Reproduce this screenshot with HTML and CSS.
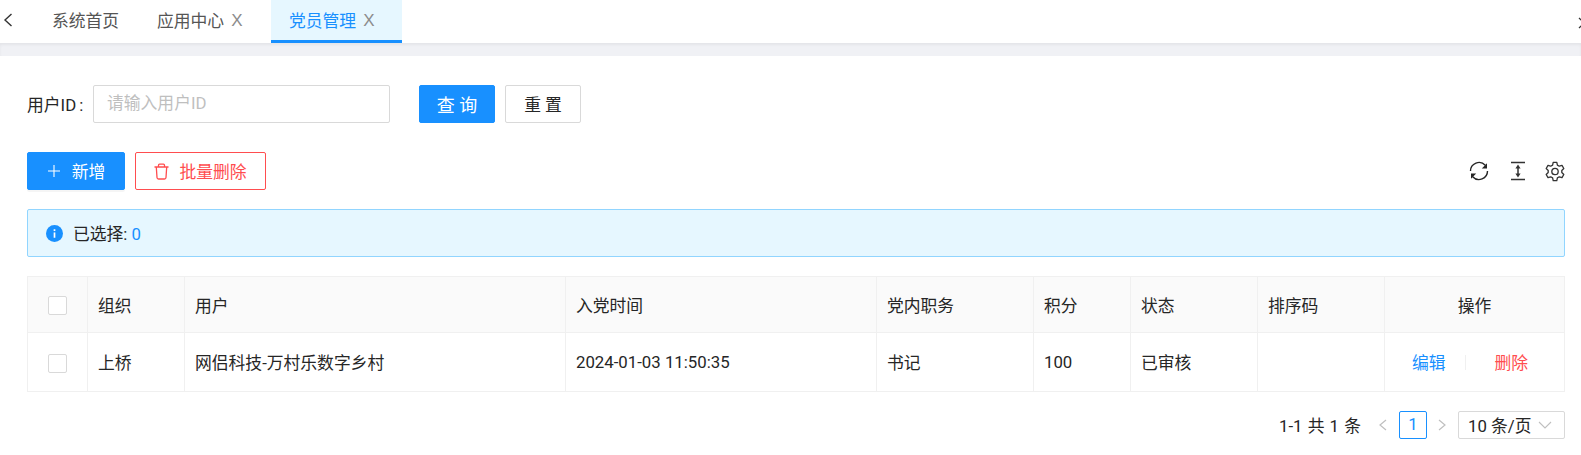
FILE: index.html
```html
<!DOCTYPE html>
<html lang="zh-CN">
<head>
    <meta charset="UTF-8">
    <title>党员管理</title>
    <link rel="stylesheet" href="styles.css">
</head>
<body>
    <div class="tabbar">
        <span class="tab-arrow">
            <svg width="10" height="14" viewBox="0 0 10 14"><path d="M8.500 1 2 7l6.500 6" fill="none" stroke="#333" stroke-width="1.400"/></svg>
        </span>
        <div class="tab tab-home">系统首页</div>
        <div class="tab tab-app">应用中心<span class="tab-x">X</span></div>
        <div class="tab tab-active">党员管理<span class="tab-x">X</span></div>
        <span class="tab-arrow-right">
            <svg width="10" height="12" viewBox="0 0 10 12"><path d="M2 1 7.500 6 2 11" fill="none" stroke="#333" stroke-width="1.300"/></svg>
        </span>
    </div>
    <div class="gap-bar"></div>

    <div class="content">
        <form class="search-row">
            <label class="search-label">用户ID<span class="colon">:</span></label>
            <div class="search-input">请输入用户ID</div>
            <button type="button" class="btn btn-primary btn-search">查 询</button>
            <button type="button" class="btn btn-reset">重 置</button>
        </form>

        <div class="toolbar">
            <button type="button" class="btn btn-primary btn-add">
                <svg width="14" height="14" viewBox="0 0 14 14"><path d="M7 1v12M1 7h12" stroke="#fff" stroke-width="1.100"/></svg>
                新增
            </button>
            <button type="button" class="btn btn-danger">
                <svg width="15" height="17" viewBox="0 0 15 17" fill="none" stroke="#ff4d4f" stroke-width="1.300"><path d="M.5 4h14M4.500 4V2.200q0-1 1-1h4q1 0 1 1V4M2.300 4l.7 10.500q.1 1.500 1.500 1.500h6q1.400 0 1.500-1.500L12.700 4"/></svg>
                批量删除
            </button>
            <div class="tool-icons">
                <svg width="20" height="20" viewBox="0 0 20 20" fill="none"><path d="M1.500 10A8.500 8.500 0 0 1 16.300 4.300M18.500 10A8.500 8.500 0 0 1 3.700 15.700" stroke="#262626" stroke-width="1.400"/><path d="M18 2.300v5.200h-5.200zM2 17.700v-5.200h5.200z" fill="#262626"/></svg>
                <svg class="icon-height" width="16" height="20" viewBox="0 0 16 20" fill="none"><path d="M1 1.500h14M1 18.500h14M8 5v10" stroke="#333" stroke-width="1.500"/><path d="M8 3.500 5.400 7.500h5.200zM8 16.500 5.400 12.500h5.200z" fill="#333"/></svg>
                <svg width="20" height="21" viewBox="0 0 20 20" fill="none" stroke="#333" stroke-width="1.300"><path d="M8.200.8h3.600l.6 2.800 1.900 1.100 2.700-.8 1.800 3.100-2 2v2l2 2-1.800 3.100-2.700-.8-1.900 1.100-.6 2.800H8.200l-.6-2.800-1.900-1.100-2.700.8L1.200 13l2-2V9l-2-2L3 3.900l2.700.8 1.900-1.100z" stroke-linejoin="round"/><circle cx="10" cy="10" r="3.200"/></svg>
            </div>
        </div>

        <div class="alert">
            <svg width="17" height="17" viewBox="0 0 16 16"><circle cx="8" cy="8" r="8" fill="#1890ff"/><rect x="7.200" y="7" width="1.600" height="5" fill="#fff"/><rect x="7.200" y="4" width="1.600" height="1.700" fill="#fff"/></svg>
            <span>已选择: <a class="alert-count">0</a></span>
        </div>

        <table class="data-table">
            <colgroup>
                <col class="c-check"><col class="c-org"><col class="c-user"><col class="c-time">
                <col class="c-post"><col class="c-score"><col class="c-status"><col class="c-sort"><col>
            </colgroup>
            <thead>
                <tr>
                    <th class="cell-check"><span class="checkbox"></span></th>
                    <th>组织</th>
                    <th>用户</th>
                    <th>入党时间</th>
                    <th>党内职务</th>
                    <th>积分</th>
                    <th>状态</th>
                    <th>排序码</th>
                    <th class="cell-center">操作</th>
                </tr>
            </thead>
            <tbody>
                <tr>
                    <td class="cell-check"><span class="checkbox"></span></td>
                    <td>上桥</td>
                    <td>网侣科技-万村乐数字乡村</td>
                    <td>2024-01-03 11:50:35</td>
                    <td>书记</td>
                    <td>100</td>
                    <td>已审核</td>
                    <td></td>
                    <td class="cell-center">
                        <div class="row-actions">
                            <a class="link-edit">编辑</a>
                            <i class="action-divider"></i>
                            <a class="link-delete">删除</a>
                        </div>
                    </td>
                </tr>
            </tbody>
        </table>

        <div class="pagination">
            <span class="page-total">1-1 共 1 条</span>
            <svg class="page-arrow" width="10" height="12" viewBox="0 0 10 12"><path d="M8 1 2 6l6 5" fill="none" stroke="#bfbfbf" stroke-width="1.200"/></svg>
            <span class="page-current">1</span>
            <svg class="page-arrow" width="10" height="12" viewBox="0 0 10 12"><path d="M2 1l6 5-6 5" fill="none" stroke="#bfbfbf" stroke-width="1.200"/></svg>
            <span class="page-size">10 条/页
                <svg width="14" height="8" viewBox="0 0 14 8"><path d="M1 1l6 6 6-6" fill="none" stroke="#bfbfbf" stroke-width="1.100"/></svg>
            </span>
        </div>
    </div>
</body>
</html>
```

FILE: styles.css
```css
* {
    box-sizing: border-box;
}
html, body {
    overflow: hidden;
}
body {
    margin: 0;
    height: 455px;
    background: #fff;
    color: #262626;
    font-family: Roboto, "Noto Sans CJK SC", sans-serif;
    font-size: 16.8px;
}
/* Tabs */
.tabbar {
    display: flex;
    height: 43px;
    background: #fff;
    position: relative;
}
.tab-arrow {
    display: flex;
    align-items: center;
    width: 34px;
    padding: 0 0 3px 3px;
}
.tab-arrow-right {
    position: absolute;
    right: -6px;
    top: 13px;
}
.tab {
    display: flex;
    align-items: center;
    height: 43px;
    padding-bottom: 3px;
    color: #555;
}
.tab-home {
    width: 123px;
    padding-left: 18px;
}
.tab-app {
    width: 114px;
}
.tab-active {
    width: 131px;
    padding-left: 18px;
    color: #1890ff;
    background: #e6f7ff;
    border-bottom: 3px solid #1890ff;
    padding-bottom: 0;
}
.tab-x {
    margin: 2px 0 0 7px;
    color: #8c8c8c;
    font-family: "Liberation Sans", sans-serif;
    font-size: 17px;
}
.gap-bar {
    height: 13px;
    background: #f0f1f5;
    box-shadow: inset 0 2px 3px rgba(0,0,0,0.05);
}
.content {
    padding: 29px 16px 0 27px;
}
/* Search */
.search-row {
    display: flex;
    align-items: center;
    height: 38px;
}
.search-label {
    width: 66px;
}
.colon {
    margin-left: 3px;
}
.search-input {
    width: 297px;
    height: 38px;
    line-height: 35px;
    padding-left: 13px;
    border: 1px solid #d9d9d9;
    border-radius: 2px;
    color: #bfbfbf;
}
.btn {
    display: inline-flex;
    align-items: center;
    justify-content: center;
    height: 38px;
    border: 1px solid #d9d9d9;
    border-radius: 2px;
    background: #fff;
    color: #262626;
    font-family: inherit;
    font-size: 16.8px;
    padding: 0;
}
.btn-primary {
    background: #1890ff;
    border-color: #1890ff;
    color: #fff;
}
.btn-search {
    width: 76px;
    margin-left: 29px;
    font-size: 18px;
}
.btn-reset {
    width: 76px;
    margin-left: 10px;
}
/* Toolbar */
.toolbar {
    display: flex;
    align-items: center;
    height: 38px;
    margin-top: 29px;
}
.btn-add {
    width: 98px;
    gap: 11px;
    box-shadow: 0 2px 0 rgba(0,0,0,0.04);
}
.btn-danger {
    width: 131px;
    margin-left: 10px;
    gap: 10px;
    border-color: #ff4d4f;
    color: #ff4d4f;
}
.tool-icons {
    display: flex;
    align-items: center;
    gap: 20px;
    margin-left: auto;
}
.icon-height {
    margin: 0 -1px 0 1px;
}
/* Alert */
.alert {
    display: flex;
    align-items: center;
    gap: 10px;
    height: 48px;
    margin-top: 19px;
    padding-left: 18px;
    background: #e6f7ff;
    border: 1px solid #91d5ff;
    border-radius: 2px;
}
.alert-count {
    color: #1890ff;
}
/* Table */
.data-table {
    width: 100%;
    margin-top: 19px;
    border-collapse: collapse;
    table-layout: fixed;
    border: 1px solid #f0f0f0;
}
.c-check { width: 60px; }
.c-org { width: 97px; }
.c-user { width: 381px; }
.c-time { width: 311px; }
.c-post { width: 157px; }
.c-score { width: 97px; }
.c-status { width: 127px; }
.c-sort { width: 127px; }
.data-table th,
.data-table td {
    border: 1px solid #f0f0f0;
    padding: 0 10px;
    text-align: left;
    font-weight: 400;
    font-size: 16.8px;
}
.data-table th {
    height: 56px;
    background: #fafafa;
}
.data-table td {
    height: 59px;
}
.data-table .cell-check {
    padding: 0;
    text-align: center;
}
.data-table .cell-center {
    text-align: center;
}
.checkbox {
    display: inline-block;
    width: 19px;
    height: 19px;
    vertical-align: middle;
    background: #fff;
    border: 1px solid #d9d9d9;
    border-radius: 2px;
}
.row-actions {
    display: flex;
    align-items: center;
    justify-content: center;
    padding-right: 9px;
}
.link-edit {
    color: #1890ff;
}
.link-delete {
    color: #ff4d4f;
}
.action-divider {
    width: 1px;
    height: 15px;
    margin: 0 29px 0 19px;
    background: #f0f0f0;
}
/* Pagination */
.pagination {
    display: flex;
    align-items: center;
    justify-content: flex-end;
    height: 28px;
    margin-top: 19px;
}
.page-total {
    margin-right: 17px;
    word-spacing: 1px;
}
.page-arrow {
    margin: 0 11px 0 0;
}
.page-current {
    width: 28px;
    height: 28px;
    margin: 0 10px 0 0;
    line-height: 25px;
    text-align: center;
    color: #1890ff;
    border: 1px solid #1890ff;
    border-radius: 2px;
}
.page-size {
    display: flex;
    align-items: center;
    justify-content: space-between;
    width: 107px;
    height: 28px;
    padding: 0 12px 0 9px;
    border: 1px solid #d9d9d9;
    border-radius: 2px;
}
```
